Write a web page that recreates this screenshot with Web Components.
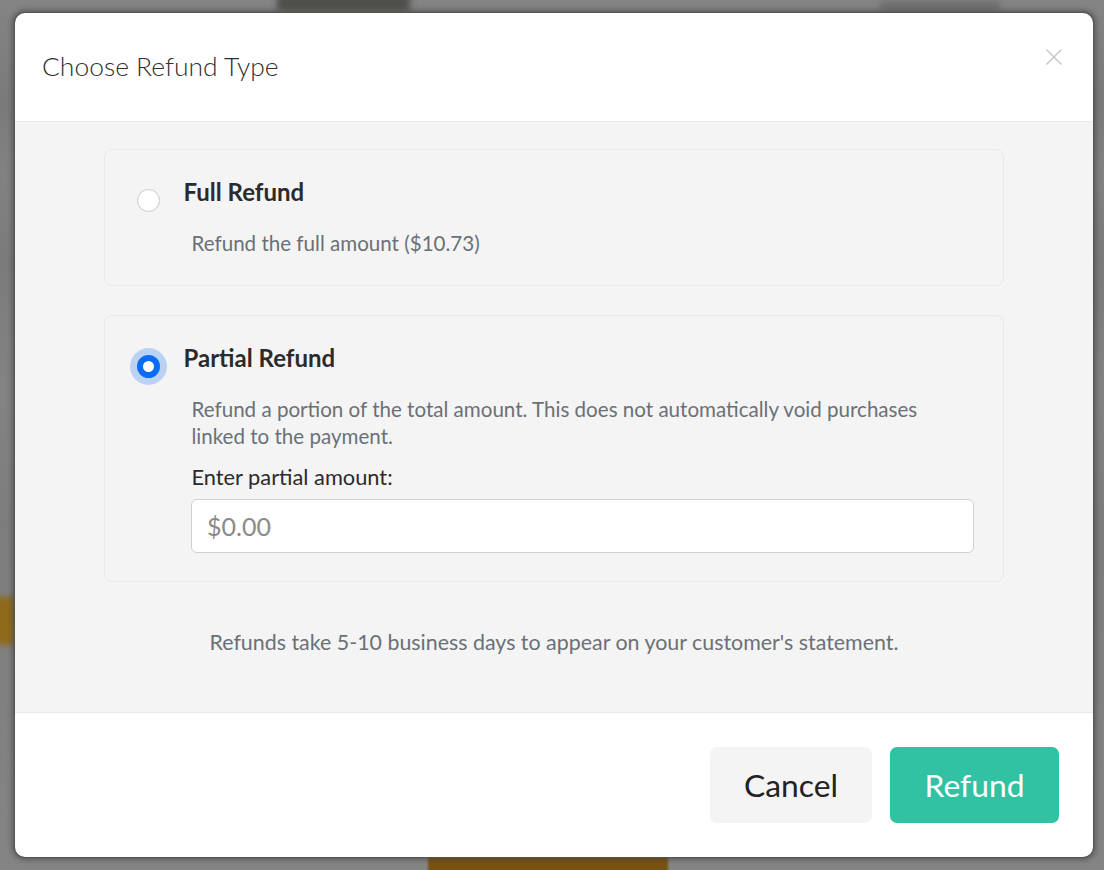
<!DOCTYPE html>
<html><head><meta charset="utf-8"><style>
html,body{margin:0;padding:0;background:#808080;height:870px;overflow:hidden;font-family:Lato,"Liberation Sans",sans-serif}
</style></head><body>
<refund-page>
<refund-modal title="Choose Refund Type">
  <refund-option heading="Full Refund" style="height:137px">
    Refund the full amount ($10.73)
  </refund-option>
  <refund-option heading="Partial Refund" checked style="height:267px;margin-top:29px">
    Refund a portion of the total amount. This does not automatically void purchases<br>linked to the payment.
    <amount-field slot="extra" label="Enter partial amount:" placeholder="$0.00"></amount-field>
  </refund-option>
  <p slot="note">Refunds take 5-10 business days to appear on your customer's statement.</p>
  <refund-button slot="actions">Cancel</refund-button>
  <refund-button slot="actions" primary>Refund</refund-button>
</refund-modal>
</refund-page>
<script>
function def(name, css, html){
  customElements.define(name, class extends HTMLElement{
    connectedCallback(){
      if(this.shadowRoot) return;
      const r=this.attachShadow({mode:'open'});
      r.innerHTML='<style>'+css+'</style>'+(typeof html==='function'?html(this):html);
    }
  });
}
def('refund-page',`
:host{display:flex;box-sizing:border-box;width:1104px;height:870px;padding:13px 11px 13px 15px;position:relative;background:linear-gradient(#848484,#7a7a7a 12%,#828282 20%,#7b7b7b 30%,#838383 45%,#7d7d7d 60%,#848484 100%);overflow:hidden}
.b{position:absolute;filter:blur(3px)}
::slotted(*){position:relative}
`,`<div class="b" style="left:277px;top:-6px;width:133px;height:17px;background:#4f4f4a"></div>
<div class="b" style="left:880px;top:2px;width:120px;height:9px;background:#6c6c6c"></div>
<div class="b" style="left:-6px;top:597px;width:22px;height:48px;background:#8f6a1a"></div>
<div class="b" style="left:428px;top:856px;width:240px;height:20px;background:#7a5210;filter:blur(1px)"></div>
<slot></slot>`);

def('refund-modal',`
:host{display:flex;flex-direction:column;width:1078px;height:844px;background:#fff;border-radius:10px;overflow:hidden;box-shadow:0 0 0 1px #555,0 0 5px 3px rgba(60,60,60,.55)}
header{flex:none;box-sizing:border-box;height:109px;display:flex;align-items:center;justify-content:space-between;padding:0 29px 0 27px;border-bottom:1px solid #ebebeb}
h2{margin:0;font:300 26.45px/1.2 Lato,"Liberation Sans",sans-serif;color:#2f2f2f}
svg{display:block;margin-top:-20px}
main{flex:none;box-sizing:border-box;height:590px;background:#f4f4f5;padding:27px 89px 0;display:flex;flex-direction:column}
footer{flex:1;border-top:1px solid #e9e9e9;display:flex;justify-content:flex-end;align-items:flex-start;gap:18px;padding:34px 34px 0 0}
::slotted(p){margin:46px 0 0;text-align:center;font-size:21.4px;line-height:28px;color:#6b7075}
`,t=>`<header><h2>${t.getAttribute('title')}</h2>
<svg width="20" height="20" viewBox="0 0 20 20" fill="none" stroke="#c4c4c4" stroke-width="1.4"><path d="M2.5 2.5 17.5 17.5M17.5 2.5 2.5 17.5"/></svg></header>
<main><slot></slot><slot name="note"></slot></main>
<footer><slot name="actions"></slot></footer>`);

def('refund-option',`
:host{display:block;box-sizing:border-box;flex:none;border:1px solid #e9e9eb;border-radius:8px;padding:25px 28px 0 25.5px;position:relative}
.row{display:flex;align-items:flex-start}
.radio{flex:none;box-sizing:border-box;width:23px;height:23px;border-radius:50%;margin:13.5px 0 0 6px;background:#fff;border:1px solid #c9c9c9}
.on{border:6px solid #0a6cf5;background:#fff;box-shadow:0 0 0 7px #bcd2f3}
h3{margin:0 0 0 24px;font:700 24px/34px Lato,"Liberation Sans",sans-serif;color:#2b2b2d}
.txt{margin:18px 0 0 61px;font-size:20.57px;line-height:27px;color:#6b7075;white-space:nowrap}
.extra{margin-left:61px}
`,t=>`<div class="row"><span class="radio ${t.hasAttribute('checked')?'on':''}"></span><h3>${t.getAttribute('heading')}</h3></div>
<div class="txt"><slot></slot></div><div class="extra"><slot name="extra"></slot></div>`);

def('amount-field',`
:host{display:block;margin-top:13px}
label{display:block;font-size:21.8px;line-height:27px;color:#2b2b2d}
.in{box-sizing:border-box;margin:9px 0 0 -.5px;height:54px;width:783px;background:#fff;border:1px solid #cfcfd3;border-radius:6px;padding:0 15px;display:flex;align-items:center;font-size:25px;color:#8a8a8a}
`,t=>`<label>${t.getAttribute('label')}</label><div class="in">${t.getAttribute('placeholder')}</div>`);

def('refund-button',`
:host{display:flex;align-items:center;justify-content:center;box-sizing:border-box;height:76px;border-radius:7px;font-size:31.8px;width:162px;background:#f4f4f5;color:#222}
:host([primary]){width:169px;background:#30c2a2;color:#fff}
`,`<slot></slot>`);
</script>
</body></html>
